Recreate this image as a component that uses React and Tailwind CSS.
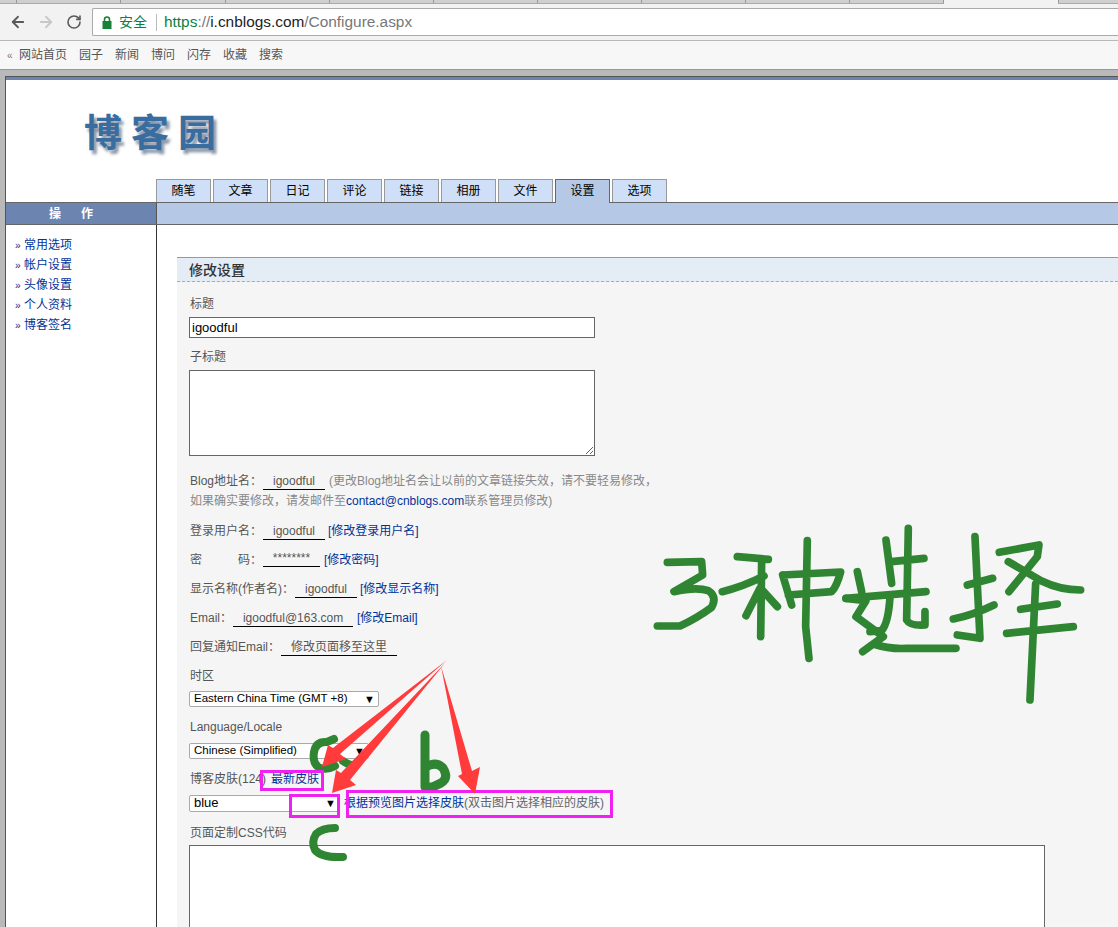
import React from "react";
import { ArrowLeft, ArrowRight, RotateCw } from "lucide-react";

const tabs = ["随笔", "文章", "日记", "评论", "链接", "相册", "文件", "设置", "选项"];
const side = ["常用选项", "帐户设置", "头像设置", "个人资料", "博客签名"];
const bookmarks = ["网站首页", "园子", "新闻", "博问", "闪存", "收藏", "搜索"];
const chromeTabs = [17, 104, 105, 104, 104, 104, 104, 104, 104, 94];

function Value({ w, children }) {
  return (
    <span className={`inline-block ${w} h-[17px] leading-[16px] border-b border-black text-center text-[#555]`}>{children}</span>
  );
}

function Link({ children, className = "" }) {
  return <span className={`text-[#003399] ${className}`}>{children}</span>;
}

function Select({ w, h, text, size = "text-[12px]" }) {
  return (
    <div className={`${w} ${h} bg-white border border-[#aaa] rounded-[2px] flex items-center justify-between pl-[4px] pr-[3px] text-black ${size}`}>
      <span>{text}</span>
      <span className="text-[11px] leading-none">▼</span>
    </div>
  );
}

function Annotations() {
  const green = "#2f8532";
  return (
    <svg className="absolute left-0 top-0 pointer-events-none" width="1118" height="927" viewBox="0 0 1118 927" fill="none">
      <g stroke={green} strokeWidth="8" strokeLinecap="round" strokeLinejoin="round">
        <path d="M334 739 L327 742 Q316 741 314 752 Q312 764 320 768 Q328 770 335 766 M343 761 Q350 766 355 765" />
        <path d="M425 735 L425 787 M426 767 Q436 761 443 768 Q449 778 441 783 Q434 787 428 788" strokeWidth="9" />
        <path d="M335 828 Q322 828 316 834 Q311 842 315 850 Q322 858 343 857" />
      </g>
      <g transform="translate(640 520) scale(0.3333)" stroke={green} strokeWidth="23" strokeLinecap="round" strokeLinejoin="round">
        <path d="M82 127 L185 125 L188 165 L102 215 Q170 200 205 212 Q232 230 215 262 Q170 295 120 318 L52 318" />
        <path d="M292 110 L385 118 M247 215 Q310 200 372 168 M365 122 L362 350 M360 205 L318 287 M362 205 L412 260" />
        <path d="M428 165 L455 255 M428 165 L602 156 Q590 200 575 215 L445 225 M502 62 L497 320 L507 415" />
        <path d="M738 60 L755 190 M755 125 L852 115 M805 25 L800 300 Q810 318 855 315 L855 275 M618 235 L858 215 M750 232 Q745 310 725 332 L690 335" />
        <path d="M652 155 L665 215 M618 235 L678 242 L648 290 L730 350 L668 395 M700 372 Q750 388 800 385 L948 385" />
        <path d="M1005 50 L1020 355 L952 345 M982 195 L1058 175 M940 297 Q1000 285 1062 255" />
        <path d="M1078 97 L1197 75 L1192 110 L1107 215 M1105 125 L1205 183 Q1260 210 1322 210 M1142 268 L1252 252 M1100 340 L1300 320 M1187 192 L1170 540" />
      </g>
      <g stroke="#f020f0" strokeWidth="3">
        <rect x="261.5" y="771.5" width="61" height="18" />
        <rect x="290.5" y="795.5" width="48" height="21" />
        <rect x="347.5" y="791.5" width="264" height="25" />
      </g>
      <g fill="#ff3b3b">
        <polygon points="447,660 333,748 328,745 322,767 346,759 340,754" />
        <polygon points="445,663 341,773 336,770 332,793 356,785 350,780" />
        <polygon points="441,666 462,774 458,776 475,794 480,767 472,771" />
      </g>
    </svg>
  );
}

export default function App() {
  return (
    <div className="relative w-[1118px] h-[927px] overflow-hidden bg-[#b9b9b9] text-[12px] font-['Liberation_Sans','Noto_Sans_CJK_SC',sans-serif]">
      {/* browser chrome */}
      <div className="h-[4px] flex bg-[#f2f2f2] border-b border-[#aaa]">
        {chromeTabs.map((w, i) => (
          <div key={i} style={{ width: w }} className="h-[3px] bg-[#cfcfcf] border-r border-[#999]" />
        ))}
        <div className="w-[114px] h-[4px] bg-[#f2f2f2] -mb-px" />
        <div className="flex-1 h-[3px] bg-[#cfcfcf] border-l border-[#999]" />
      </div>
      <div className="h-[37px] bg-[#f2f2f2] border-b border-[#b8b8b8] flex items-start pt-[4px]">
        <div className="w-[92px] h-[28px] flex items-center text-[#5a5a5a]">
          <ArrowLeft size={18} strokeWidth={2.4} className="ml-[9px]" />
          <ArrowRight size={18} strokeWidth={2.4} className="ml-[10px] text-[#c8c8c8]" />
          <RotateCw size={16} strokeWidth={2.4} className="ml-[11px]" />
        </div>
        <div className="flex-1 h-[28px] bg-white border border-r-0 border-[#aaa] rounded-l-[2px] flex items-center text-[15.4px]">
          <svg className="ml-[9px]" width="10" height="13" viewBox="0 0 10 13">
            <rect x="0.5" y="5" width="9" height="8" fill="#188038" />
            <path d="M2.5 5.5 V3.5 a2.5 2.5 0 0 1 5 0 V5.5" fill="none" stroke="#188038" strokeWidth="1.6" />
          </svg>
          <span className="ml-[7px] text-[14px] text-[#0b8043] w-[28px]">安全</span>
          <span className="ml-[9px] w-px h-[17px] bg-[#bbb]" />
          <span className="ml-[7px]">
            <span className="text-[#0b8043]">https</span>
            <span className="text-[#777]">://</span>
            <span className="text-[#222]">i.cnblogs.com</span>
            <span className="text-[#777]">/Configure.aspx</span>
          </span>
        </div>
      </div>
      <div className="h-[29px] bg-[#f7f7f7] border-b border-[#999] flex items-center pl-[7px] text-[#555]">
        <span className="w-[12px] text-[10px] text-[#777]">«</span>
        <div className="flex gap-[12px]">
          {bookmarks.map((b) => (
            <span key={b}>{b}</span>
          ))}
        </div>
      </div>

      {/* page */}
      <div className="mt-[6px] ml-[5px] h-[900px] bg-white border-l border-t border-[#555]">
        <div className="h-[3px] bg-[#6b85b0]" />
        <div className="h-[122px] flex flex-col justify-between">
          <div className="pl-[78px] pt-[28px] text-[38px] leading-[50px] font-bold tracking-[9px] text-[#3a6d9f] [text-shadow:3px_4px_3px_#8a97a8]">
            博客园
          </div>
          <div className="pl-[150px] flex gap-[2px] h-[23px] relative z-10">
            {tabs.map((t) => {
              const active = t === "设置";
              return (
                <div
                  key={t}
                  className={
                    active
                      ? "w-[55px] h-[24px] bg-[#b5c8e5] border border-b-0 border-[#666] flex items-center justify-center text-black pb-px"
                      : "w-[55px] h-[23px] bg-[#cfdff7] border border-b-0 border-[#999] flex items-center justify-center text-black"
                  }
                >
                  {t}
                </div>
              );
            })}
          </div>
        </div>
        <div className="h-[23px] flex border-y border-[#666] bg-[#b5c8e5]">
          <div className="w-[151px] bg-[#6b85b0] border-r border-[#555] flex items-center pl-[43px] gap-[20px] text-white font-bold">
            <span>操</span>
            <span>作</span>
          </div>
        </div>
        <div className="flex h-[702px]">
          <div className="w-[151px] shrink-0 border-r border-[#333] pt-[10px] pl-[9px]">
            {side.map((s) => (
              <div key={s} className="h-[20px] flex items-center text-[#003399]">
                <span className="w-[9px] text-[10px] text-[#003399]">»</span>
                <span>{s}</span>
              </div>
            ))}
          </div>
          <div className="flex-1 pl-[20px] pt-[32px] min-w-0">
            <div className="h-[670px] bg-[#f5f5f5] border-t border-[#999]">
              <div className="h-[24px] bg-[#e4ecf6] border-b border-dashed border-[#aaa] flex items-center pl-[12px] pt-px text-[14px] font-medium text-[#333]">
                修改设置
              </div>
              <div className="pl-[12px] pt-[12px] text-[#555]">
                <div className="h-[19px] leading-[20px] pl-px">标题</div>
                <input
                  readOnly
                  value="igoodful"
                  className="block mt-[4px] w-[406px] h-[21px] bg-white border border-[#666] px-[2px] text-[13px] text-black outline-none"
                />
                <div className="mt-[9px] h-[19px] leading-[20px] pl-px">子标题</div>
                <textarea readOnly className="block mt-[4px] w-[406px] h-[86px] bg-white border border-[#666] outline-none" />

                <div className="mt-[15px] h-[20px] leading-[20px] pl-px whitespace-nowrap">
                  Blog地址名：<Value w="w-[62px] ml-[1px]">igoodful</Value>
                  <span className="ml-[4px] text-[#888]">(更改Blog地址名会让以前的文章链接失效，请不要轻易修改，</span>
                </div>
                <div className="h-[20px] leading-[20px] pl-px whitespace-nowrap text-[#888]">
                  如果确实要修改，请发邮件至<Link>contact@cnblogs.com</Link>联系管理员修改)
                </div>
                <div className="mt-[10px] h-[20px] leading-[20px] pl-px whitespace-nowrap">
                  登录用户名：<Value w="w-[62px] ml-px">igoodful</Value>
                  <Link className="ml-[3px]">[修改登录用户名]</Link>
                </div>
                <div className="mt-[9px] h-[20px] leading-[20px] pl-px whitespace-nowrap flex">
                  <span className="w-[48px]">密</span>
                  <span className="w-[24px]">码：</span>
                  <Value w="w-[57px] ml-px">********</Value>
                  <Link className="ml-[4px]">[修改密码]</Link>
                </div>
                <div className="mt-[9px] h-[20px] leading-[20px] pl-px whitespace-nowrap">
                  显示名称(作者名)：<Value w="w-[62px] ml-px">igoodful</Value>
                  <Link className="ml-[3px]">[修改显示名称]</Link>
                </div>
                <div className="mt-[9px] h-[20px] leading-[20px] pl-px whitespace-nowrap">
                  Email：<Value w="w-[120px] ml-px">igoodful@163.com</Value>
                  <Link className="ml-[4px]">[修改Email]</Link>
                </div>
                <div className="mt-[9px] h-[20px] leading-[20px] pl-px whitespace-nowrap">
                  回复通知Email：<Value w="w-[116px] ml-px">修改页面移至这里</Value>
                </div>
                <div className="mt-[9px] h-[20px] leading-[20px] pl-px">时区</div>
                <div className="mt-[5px]">
                  <Select w="w-[190px]" h="h-[16px]" size="text-[11.5px]" text="Eastern China Time (GMT +8)" />
                </div>
                <div className="mt-[10px] h-[20px] leading-[20px] pl-px">Language/Locale</div>
                <div className="mt-[6px]">
                  <Select w="w-[180px]" h="h-[16px]" size="text-[11.5px]" text="Chinese (Simplified)" />
                </div>
                <div className="mt-[10px] h-[20px] leading-[20px] pl-px whitespace-nowrap">
                  博客皮肤(124)<Link className="ml-[5px]">最新皮肤</Link>
                </div>
                <div className="mt-[5px] flex items-center">
                  <Select w="w-[151px]" h="h-[17px]" size="text-[13px]" text="blue" />
                  <span className="ml-[4px] whitespace-nowrap text-[#666]">
                    <Link>根据预览图片选择皮肤</Link>(双击图片选择相应的皮肤)
                  </span>
                </div>
                <div className="mt-[11px] h-[19px] leading-[20px] pl-px">页面定制CSS代码</div>
                <textarea readOnly className="block mt-[3px] w-[856px] h-[200px] bg-white border border-[#666] outline-none resize-none" />
              </div>
            </div>
          </div>
        </div>
      </div>
      <Annotations />
    </div>
  );
}
